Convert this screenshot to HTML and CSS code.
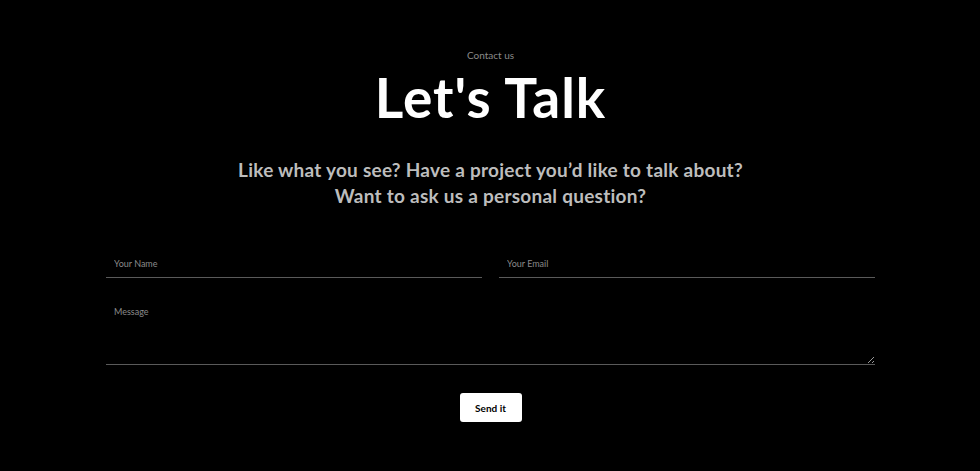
FILE: index.html
```html
<!DOCTYPE html>
<html lang="en">
<head>
<meta charset="utf-8">
<title>Let's Talk</title>
<link rel="stylesheet" href="styles.css">
</head>
<body>
<section class="contact">
  <p class="eyebrow">Contact us</p>
  <h1 class="title">Let's Talk</h1>
  <p class="lead">Like what you see? Have a project you’d like to talk about?<br>Want to ask us a personal question?</p>
  <form class="form">
    <div class="row">
      <input class="field" type="text" placeholder="Your Name">
      <input class="field" type="email" placeholder="Your Email">
    </div>
    <textarea class="field message" placeholder="Message"></textarea>
    <div class="actions">
      <button class="send" type="button">Send it</button>
    </div>
  </form>
</section>
</body>
</html>
```

FILE: styles.css
```css
html, body {
  margin: 0;
  padding: 0;
  background: #000;
}
body {
  font-family: "Lato", "Open Sans", sans-serif;
  color: #fff;
}
.contact {
  width: 769px;
  margin: 0 auto;
  padding: 48px 0 0 1px;
  text-align: center;
}
.eyebrow {
  margin: 0;
  font-size: 10px;
  line-height: 14px;
  color: #8a8a8a;
}
.title {
  margin: 4px 0 0;
  font-size: 55px;
  line-height: 62px;
  font-weight: 700;
  letter-spacing: 1px;
}
.lead {
  margin: 29px 0 0;
  font-size: 19px;
  line-height: 25.5px;
  font-weight: 700;
  letter-spacing: 0.25px;
  color: #bdbdbd;
}
.form {
  margin-top: 41px;
  text-align: left;
}
.row {
  display: flex;
  gap: 17px;
}
.field {
  display: block;
  box-sizing: border-box;
  width: 100%;
  background: transparent;
  border: 0;
  border-bottom: 1px solid #5a5a5a;
  color: #fff;
  font-family: inherit;
  font-size: 9px;
  padding: 8px 8px;
  height: 29px;
  outline: none;
}
.field::placeholder {
  color: #8a8a8a;
}
.message {
  margin-top: 19px;
  height: 68px;
  padding: 9px 8px;
  resize: vertical;
}
.actions {
  display: flex;
  justify-content: center;
  margin-top: 28px;
}
.send {
  width: 62px;
  height: 29px;
  background: #fff;
  color: #000;
  border: 0;
  border-radius: 3px;
  font-family: inherit;
  font-size: 10px;
  font-weight: 700;
  cursor: pointer;
}
```
